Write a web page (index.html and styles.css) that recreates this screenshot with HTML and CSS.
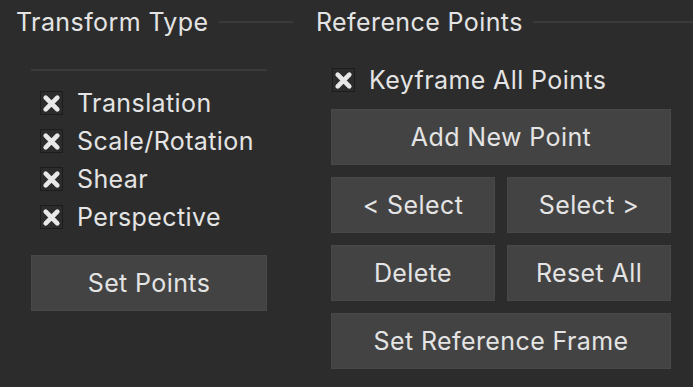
FILE: index.html
```html
<!DOCTYPE html>
<html>
<head>
<meta charset="utf-8">
<link rel="stylesheet" href="styles.css">
</head>
<body>
<div class="panels">
  <section class="panel panel-left">
    <div class="heading"><span class="heading-text">Transform Type</span><span class="heading-line"></span></div>
    <div class="group">
      <div class="separator"></div>
      <div class="checks">
        <label class="check"><span class="box"><svg viewBox="0 0 18 18"><path d="M3.5 3.5 L14.5 14.5 M14.5 3.5 L3.5 14.5"/></svg></span><span class="label">Translation</span></label>
        <label class="check"><span class="box"><svg viewBox="0 0 18 18"><path d="M3.5 3.5 L14.5 14.5 M14.5 3.5 L3.5 14.5"/></svg></span><span class="label">Scale/Rotation</span></label>
        <label class="check"><span class="box"><svg viewBox="0 0 18 18"><path d="M3.5 3.5 L14.5 14.5 M14.5 3.5 L3.5 14.5"/></svg></span><span class="label">Shear</span></label>
        <label class="check"><span class="box"><svg viewBox="0 0 18 18"><path d="M3.5 3.5 L14.5 14.5 M14.5 3.5 L3.5 14.5"/></svg></span><span class="label">Perspective</span></label>
      </div>
      <button class="btn btn-set-points">Set Points</button>
    </div>
  </section>
  <section class="panel panel-right">
    <div class="heading"><span class="heading-text">Reference Points</span><span class="heading-line"></span></div>
    <div class="group group-right">
      <label class="check check-keyframe"><span class="box"><svg viewBox="0 0 18 18"><path d="M3.5 3.5 L14.5 14.5 M14.5 3.5 L3.5 14.5"/></svg></span><span class="label">Keyframe All Points</span></label>
      <div class="btn-grid">
        <button class="btn wide">Add New Point</button>
        <button class="btn">&lt; Select</button>
        <button class="btn">Select &gt;</button>
        <button class="btn">Delete</button>
        <button class="btn">Reset All</button>
        <button class="btn wide">Set Reference Frame</button>
      </div>
    </div>
  </section>
</div>
</body>
</html>
```
FILE: styles.css
```css
html, body {
  margin: 0;
  padding: 0;
  background: #2c2c2c;
  width: 693px;
  height: 387px;
  overflow: hidden;
}
body {
  font-family: Inter, "Noto Sans", sans-serif;
  font-size: 25px;
  font-weight: 400;
  letter-spacing: 0.4px;
  color: #e4e4e4;
}
.panels {
  display: flex;
  gap: 23px;
  padding-left: 16px;
}
.panel-left {
  width: 277px;
  flex: none;
}
.panel-right {
  flex: 1;
}
.heading {
  display: flex;
  align-items: center;
  height: 44px;
}
.heading-text {
  white-space: nowrap;
}
.heading-line {
  flex: 1;
  height: 2px;
  background: #3a3a3a;
  margin-left: 10px;
}
.group {
  padding-left: 15px;
  display: flex;
  flex-direction: column;
}
.separator {
  height: 2px;
  width: 236px;
  background: #3a3a3a;
  margin-top: 25px;
}
.checks {
  margin-top: 13px;
  display: flex;
  flex-direction: column;
}
.check {
  display: flex;
  align-items: center;
  height: 38px;
  gap: 14px;
  padding-left: 9px;
}
.box {
  width: 23px;
  height: 24px;
  border: 1px solid #1c1c1c;
  display: flex;
  align-items: center;
  justify-content: center;
  box-sizing: border-box;
}
.box svg {
  width: 19px;
  height: 19px;
}
.box path {
  stroke: #e8e8e8;
  stroke-width: 4.4;
  stroke-linecap: round;
  fill: none;
}
.btn {
  font-family: inherit;
  font-size: 25px;
  font-weight: 400;
  letter-spacing: 0.4px;
  color: #e4e4e4;
  background: #434343;
  border: 1px solid #484848;
  height: 56px;
  padding: 0;
}
.btn-set-points {
  width: 236px;
  margin-top: 19px;
}
.group-right {
  padding-left: 15px;
}
.check-keyframe {
  padding-left: 1px;
  margin-top: 17px;
}
.btn-grid {
  margin-top: 10px;
  width: 340px;
  display: grid;
  grid-template-columns: 1fr 1fr;
  gap: 12px;
}
.btn-grid .wide {
  grid-column: 1 / span 2;
}
```
